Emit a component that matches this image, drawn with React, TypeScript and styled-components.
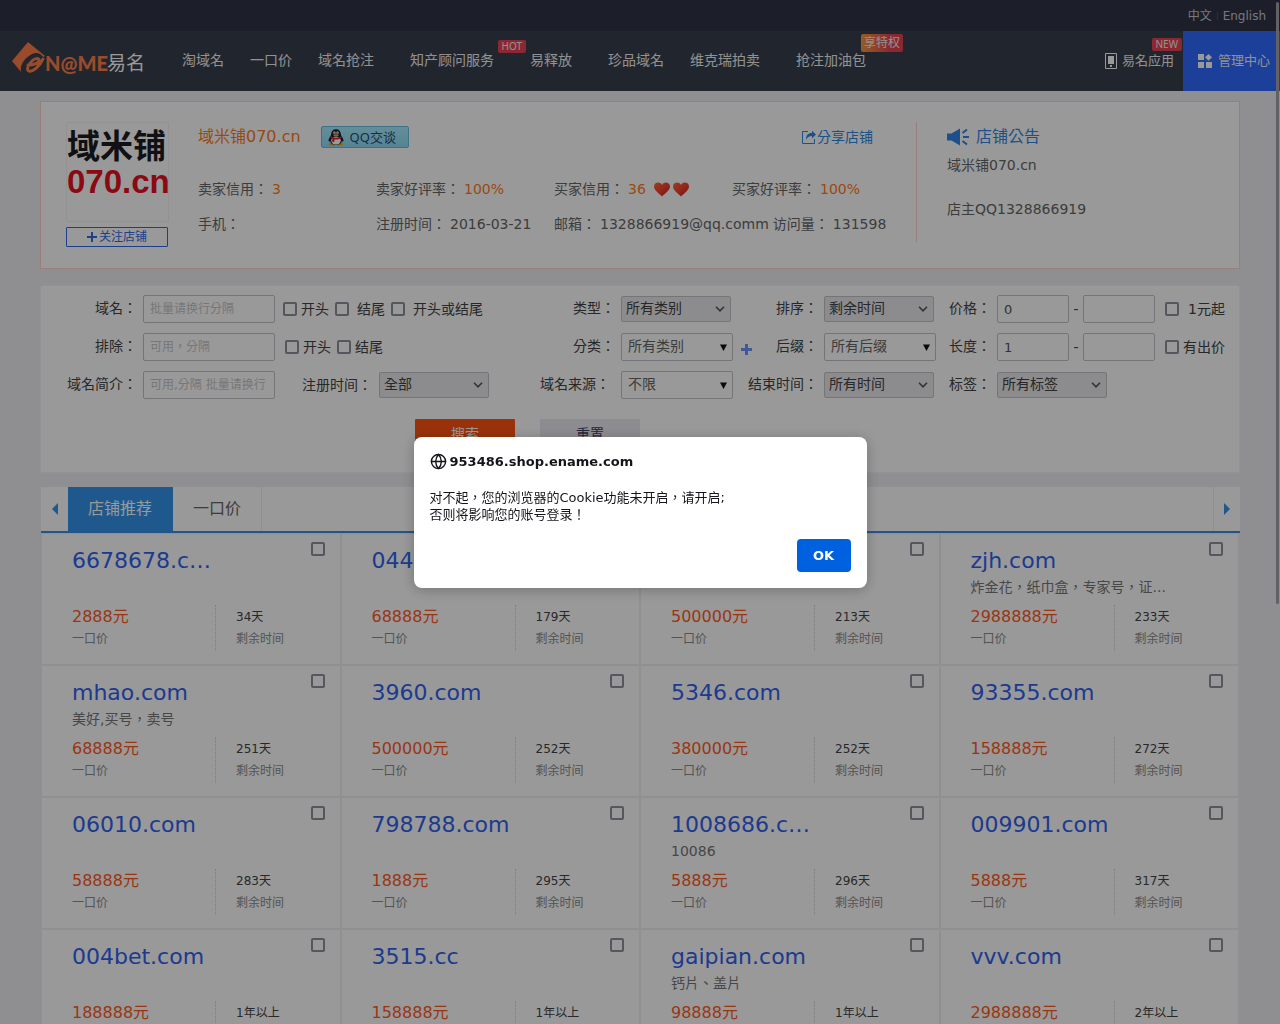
import React from "react";
import styled, { createGlobalStyle } from "styled-components";
import { Globe } from "lucide-react";

const sans = `"DejaVu Sans", "Noto Sans CJK TC", sans-serif`;

const GlobalStyle = createGlobalStyle`
  *, *::before, *::after { box-sizing: border-box; }
  body {
    margin: 0;
    background: #efeff4;
    font: 14px/20px ${sans};
    color: #444;
  }
  button, input, select { font: inherit; color: inherit; margin: 0; }
  a { text-decoration: none; color: inherit; }
  h1, h2, h3, p, ul, dl, dd { margin: 0; padding: 0; font-weight: normal; }
  ul { list-style: none; }
`;

const Page = styled.div`
  height: 100vh;
  overflow: hidden;
`;

/* ---------- header ---------- */
const TopBar = styled.div`
  display: flex;
  justify-content: flex-end;
  align-items: center;
  gap: 5px;
  height: 31px;
  padding-right: 14px;
  background: #2f3446;
  color: #c4c8d4;
  font-size: 12px;
`;
const Slash = styled.i`
  width: 1px;
  height: 8px;
  background: #4a5064;
`;
const NavBar = styled.header`
  display: flex;
  height: 60px;
  padding-left: 12px;
  background: #383e4e;
  color: #f2f2f2;
`;
const Logo = styled.a`
  width: 157px;
  padding-top: 9px;
`;
const NavList = styled.ul`
  display: flex;
  flex: 1;
`;
const NavItem = styled.li<{ $wide?: boolean }>`
  position: relative;
  padding: 0 13px;
  margin-left: ${(p) => (p.$wide ? 10 : 0)}px;
  line-height: 58px;
  white-space: nowrap;
`;
const Badge = styled.span<{ $large?: boolean }>`
  position: absolute;
  top: ${(p) => (p.$large ? 3 : 9)}px;
  right: ${(p) => (p.$large ? -24 : -19)}px;
  padding: 0 ${(p) => (p.$large ? 3 : 4)}px;
  border-radius: 2px;
  background: ${(p) => (p.$large ? "linear-gradient(90deg, #f79a45, #e8434f 70%)" : "#e84453")};
  font: ${(p) => (p.$large ? "12px/18px" : "10px/13px")} "Noto Sans", "Noto Sans CJK SC", sans-serif;
`;
const AppLink = styled.a`
  position: relative;
  display: flex;
  align-items: center;
  gap: 5px;
  padding-right: 9px;
  font-size: 13px;
`;
const NewBadge = styled(Badge)`
  top: 7px;
  right: 1px;
`;
const ManageLink = styled.a`
  display: flex;
  align-items: center;
  gap: 6px;
  padding: 0 10px 0 15px;
  background: #2f69ff;
  font-size: 13px;
`;

/* ---------- shop card ---------- */
const Container = styled.main`
  max-width: 1200px;
  margin: 10px auto 0;
`;
const ShopCard = styled.section`
  display: flex;
  min-height: 168px;
  padding: 20px 25px;
  border: 1px solid #ffd2cf;
  background: #fff;
  color: #666;
`;
const ShopSide = styled.div`
  flex: none;
  width: 103px;
  margin-right: 29px;
`;
const Avatar = styled.div`
  height: 100px;
  padding-top: 6px;
  border: 1px solid #f3f3f6;
  font: bold 33px/35px "Liberation Sans", "Noto Sans CJK SC", sans-serif;
  color: #1b1c24;
  white-space: nowrap;
`;
const AvatarDomain = styled.div`
  color: #e60f1e;
`;
const FollowButton = styled.button`
  display: flex;
  align-items: center;
  justify-content: center;
  gap: 2px;
  width: 102px;
  height: 20px;
  margin-top: 5px;
  padding: 0;
  border: 1px solid #2f69e8;
  border-radius: 1px;
  background: #fff;
  color: #2f69e8;
  font-size: 12px;
`;
const ShopInfo = styled.div`
  flex: 1;
  min-width: 0;
`;
const ShopHead = styled.div`
  display: flex;
  align-items: center;
  height: 30px;
  margin-bottom: 20px;
`;
const ShopName = styled.h1`
  margin-right: 20px;
  color: #ff7a1a;
  font-size: 16px;
`;
const QQLink = styled.a`
  display: flex;
  align-items: center;
  gap: 6px;
  width: 88px;
  height: 22px;
  padding-left: 6px;
  border: 1px solid #66bce0;
  border-radius: 2px;
  background: linear-gradient(#a8ecff, #8fdcf6);
  color: #1f4f74;
  font: 13px/20px "Noto Sans", "Noto Sans CJK SC", sans-serif;
`;
const ShareLink = styled.a`
  display: flex;
  align-items: center;
  gap: 1px;
  margin: 0 43px 0 auto;
  color: #2f86e6;
`;
const Facts = styled.dl`
  display: flex;
  line-height: 35px;
`;
const Fact = styled.div`
  display: flex;
  flex: none;
  gap: 4px;
  min-width: 178px;
  padding-right: 4px;
  white-space: nowrap;
  &:last-child { min-width: 0; padding-right: 0; }
`;
const FactValue = styled.dd<{ $hot?: boolean }>`
  display: flex;
  align-items: center;
  color: ${(p) => (p.$hot ? "#ff7a1a" : "inherit")};
`;
const Hearts = styled.span`
  display: flex;
  gap: 3px;
  margin-left: 8px;
`;
const Notice = styled.aside`
  flex: none;
  width: 298px;
  height: 120px;
  padding-left: 30px;
  border-left: 1px solid #ffd2cf;
  line-height: 22px;
`;
const NoticeTitle = styled.h2`
  display: flex;
  align-items: center;
  gap: 7px;
  height: 30px;
  margin-bottom: 2px;
  color: #2f86e6;
  font-size: 16px;
`;

/* ---------- filter ---------- */
const FilterForm = styled.form`
  margin-top: 16px;
  padding: 9px 0 23px;
  border: 1px solid #f4f4f8;
  background: #fff;
`;
const FilterGrid = styled.div`
  display: grid;
  grid-template-columns: 96px 1fr 75px 133px 70px 131px 42px 248px;
  row-gap: 10px;
`;
const FieldLabel = styled.label<{ $inset?: boolean }>`
  padding-right: ${(p) => (p.$inset ? 5 : 0)}px;
  line-height: 26px;
  text-align: right;
  white-space: nowrap;
`;
const Field = styled.div`
  display: flex;
  align-items: center;
  height: 28px;
  padding-left: 6px;
`;
const TextInput = styled.input<{ $short?: boolean }>`
  width: ${(p) => (p.$short ? 72 : 132)}px;
  height: 28px;
  padding: 0 6px;
  border: 1px solid #c4c4c9;
  border-radius: 2px;
  background: #fff;
  color: #555;
  font-size: ${(p) => (p.$short ? 13 : 12)}px;
  &::placeholder { color: #c6c6ca; }
`;
const Dash = styled.span`
  width: 14px;
  text-align: center;
`;
const SelectWrap = styled.span`
  display: inline-grid;
  align-items: center;
  svg {
    grid-area: 1 / 1;
    justify-self: end;
    margin-right: 6px;
    pointer-events: none;
  }
`;
const NativeSelect = styled.select<{ $plain?: boolean }>`
  grid-area: 1 / 1;
  appearance: none;
  width: ${(p) => (p.$plain ? 112 : 110)}px;
  height: ${(p) => (p.$plain ? 28 : 26)}px;
  padding: 0 ${(p) => (p.$plain ? 6 : 4)}px 2px;
  border: 1px solid #c4c4c9;
  border-radius: 2px;
  background: ${(p) => (p.$plain ? "#fff" : "#e9e9ed")};
  color: ${(p) => (p.$plain ? "#666" : "#444")};
`;
const Tick = styled.input`
  appearance: none;
  flex: none;
  width: 14px;
  height: 14px;
  border: 2px solid #8f8f9d;
  border-radius: 2px;
  background: #fff;
`;
const TickLabel = styled.label<{ $lead?: number; $gap?: number }>`
  display: flex;
  align-items: center;
  gap: ${(p) => p.$gap ?? 4}px;
  margin-left: ${(p) => p.$lead ?? 6}px;
  line-height: 26px;
  white-space: nowrap;
`;
const RegLabel = styled.label`
  margin: 0 7px 0 27px;
  line-height: 26px;
`;
const AddButton = styled.button`
  display: flex;
  margin-left: 8px;
  padding: 4px 0 0;
  border: 0;
  background: none;
  color: #6c93ff;
`;
const FilterActions = styled.div`
  display: flex;
  gap: 25px;
  margin: 20px 0 0 374px;
`;
const ActionButton = styled.button<{ $primary?: boolean }>`
  width: 100px;
  height: 30px;
  padding: 0;
  border: 0;
  border-radius: 1px;
  background: ${(p) => (p.$primary ? "#ff5413" : "#ebebf2")};
  color: ${(p) => (p.$primary ? "#fff" : "#3c3f66")};
`;

/* ---------- tabs ---------- */
const Tabs = styled.nav`
  display: flex;
  height: 46px;
  margin: 14px 0 1px 1px;
  border-bottom: 2px solid #428de0;
  background: #fff;
`;
const ArrowButton = styled.button<{ $next?: boolean }>`
  display: flex;
  align-items: center;
  justify-content: center;
  width: 27px;
  padding: 0;
  margin-left: ${(p) => (p.$next ? "auto" : 0)};
  border: 0;
  border-left: ${(p) => (p.$next ? "1px solid #eee" : "0")};
  background: none;
  color: #3393ec;
`;
const Tab = styled.button<{ $active?: boolean }>`
  padding: 0 20px;
  border: 0;
  border-right: 1px solid ${(p) => (p.$active ? "#3393ec" : "#eee")};
  background: ${(p) => (p.$active ? "#3393ec" : "#fff")};
  color: ${(p) => (p.$active ? "#fff" : "#666")};
  font-size: 16px;
`;

/* ---------- listing ---------- */
const Listing = styled.ul`
  display: grid;
  grid-template-columns: repeat(4, 1fr);
  margin-left: 2px;
`;
const Item = styled.li`
  height: 132px;
  padding: 8px 15px 0 30px;
  border: solid #f0f0f4;
  border-width: 0 2px 2px 0;
  background: #fff;
`;
const ItemHead = styled.div`
  display: flex;
  justify-content: space-between;
  height: 34px;
`;
const DomainLink = styled.a`
  color: #2f62f0;
  font-size: 22px;
  line-height: 37px;
  white-space: nowrap;
`;
const Note = styled.p`
  height: 29px;
  color: #777;
  line-height: 22px;
`;
const Numbers = styled.div`
  display: flex;
  height: 46px;
`;
const PriceBox = styled.div`
  width: 144px;
  border-right: 1px dotted #d2d2d6;
`;
const TimeBox = styled.div`
  padding-left: 20px;
`;
const Price = styled.p`
  color: #ff5a1f;
  font-size: 16px;
  line-height: 24px;
`;
const Time = styled.p`
  font-size: 12px;
  line-height: 24px;
`;
const Caption = styled.p`
  color: #8c8c8c;
  font-size: 12px;
  line-height: 20px;
`;

/* ---------- alert ---------- */
const Backdrop = styled.div`
  position: fixed;
  inset: 0;
  display: flex;
  align-items: center;
  justify-content: center;
  background: rgba(0, 0, 0, 0.4);
`;
const Alert = styled.div`
  width: 453px;
  padding: 16px;
  border-radius: 8px;
  background: #fff;
  box-shadow: 0 2px 14px rgba(0, 0, 0, 0.25);
  color: #15141a;
  font-size: 13px;
  line-height: 17px;
`;
const AlertTitle = styled.h2`
  display: flex;
  align-items: center;
  gap: 3px;
  margin-bottom: 19px;
  font-size: 13px;
  font-weight: bold;
`;
const AlertActions = styled.div`
  display: flex;
  justify-content: flex-end;
  margin-top: 16px;
`;
const OkButton = styled.button`
  width: 54px;
  height: 33px;
  padding: 0;
  border: 0;
  border-radius: 4px;
  background: #0061e0;
  color: #fff;
  font-weight: bold;
`;
const ScrollThumb = styled.div`
  position: fixed;
  top: 2px;
  right: 1px;
  width: 3px;
  height: 602px;
  border-radius: 2px;
  background: #a4a4aa;
`;

const Plus = ({ size }: { size: number }) => (
  <svg width={size} height={size} viewBox="0 0 11 11" aria-hidden="true">
    <path d="M4 0h3v4h4v3H7v4H4V7H0V4h4z" fill="currentColor" />
  </svg>
);
const ThinPlus = () => (
  <svg width="10" height="10" viewBox="0 0 10 10" aria-hidden="true">
    <path d="M4 0h2v4h4v2H6v4H4V6H0V4h4z" fill="currentColor" />
  </svg>
);

const Heart = () => (
  <svg width="16" height="15" viewBox="0 0 16 15" aria-hidden="true">
    <defs>
      <linearGradient id="heart" x1="0" y1="0" x2="1" y2="1">
        <stop offset="0" stopColor="#ff6a35" />
        <stop offset=".5" stopColor="#f4412f" />
        <stop offset="1" stopColor="#c3221c" />
      </linearGradient>
    </defs>
    <path d="M8 14.5C5 11.8 0 8.4 0 4.6 0 2 2 .5 4.200.5 6 .5 7.400 1.500 8 3 8.600 1.500 10 .5 11.800.5 14 .5 16 2 16 4.600 16 8.400 11 11.800 8 14.500z" fill="url(#heart)" />
  </svg>
);

const Penguin = () => (
  <svg width="16" height="17" viewBox="0 0 16 17" aria-hidden="true">
    <ellipse cx="4.500" cy="15.200" rx="3.600" ry="1.600" fill="#f6a623" />
    <ellipse cx="11.500" cy="15.200" rx="3.600" ry="1.600" fill="#f6a623" />
    <path d="M8 .3c3 0 4.800 2 4.800 5 0 1.500 2.700 4 2.700 6.200 0 1.300-.9 1.300-1.600.4C13.500 14.500 11 16 8 16s-5.500-1.500-5.900-4.100c-.7.9-1.600.9-1.600-.4C.5 9.300 3.200 6.800 3.200 5.300c0-3 1.800-5 4.800-5z" fill="#17212b" />
    <ellipse cx="8" cy="11.600" rx="4.800" ry="4" fill="#fff" />
    <ellipse cx="6.500" cy="3.700" rx="1.200" ry="1.500" fill="#fff" />
    <ellipse cx="9.500" cy="3.700" rx="1.200" ry="1.500" fill="#fff" />
    <circle cx="6.800" cy="4" r=".5" />
    <circle cx="9.200" cy="4" r=".5" />
    <ellipse cx="8" cy="6.200" rx="2.800" ry=".9" fill="#f6a623" />
    <path d="M2.800 7.200c3 1.900 7.400 1.900 10.400 0l.5 1.700c-2.500 1.500-5 1.800-7.200 1.600l-.3 2.600-2.200-.3.300-2.800-1.900-1z" fill="#e8262a" />
  </svg>
);

const Chevron = () => (
  <svg width="10" height="6" viewBox="0 0 10 6" aria-hidden="true">
    <path d="M1 .8l4 4 4-4" fill="none" stroke="#55555c" strokeWidth="1.600" />
  </svg>
);
const Triangle = () => (
  <svg width="7" height="7" viewBox="0 0 7 7" aria-hidden="true">
    <path d="M0 .5h7L3.500 7z" fill="#111" />
  </svg>
);

function Select({ id, value, plain }: { id: string; value: string; plain?: boolean }) {
  return (
    <SelectWrap>
      <NativeSelect id={id} $plain={plain} defaultValue={value}>
        <option>{value}</option>
      </NativeSelect>
      {plain ? <Triangle /> : <Chevron />}
    </SelectWrap>
  );
}

const navItems: { text: string; badge?: string; large?: boolean; wide?: boolean }[] = [
  { text: "淘域名" },
  { text: "一口价" },
  { text: "域名抢注" },
  { text: "知产顾问服务", badge: "HOT", wide: true },
  { text: "易释放", wide: true },
  { text: "珍品域名", wide: true },
  { text: "维克瑞拍卖" },
  { text: "抢注加油包", badge: "享特权", large: true, wide: true },
];

const facts = [
  [
    { name: "卖家信用", value: "3", hot: true },
    { name: "卖家好评率", value: "100%", hot: true },
    { name: "买家信用", value: "36", hot: true, hearts: 2 },
    { name: "买家好评率", value: "100%", hot: true },
  ],
  [
    { name: "手机", value: "" },
    { name: "注册时间", value: "2016-03-21" },
    { name: "邮箱", value: "1328866919@qq.comm" },
    { name: "访问量", value: "131598" },
  ],
] as { name: string; value: string; hot?: boolean; hearts?: number }[][];

const items: [string, string, string, string][] = [
  ["6678678.c…", "", "2888", "34天"],
  ["04499.com", "", "68888", "179天"],
  ["5518.com", "", "500000", "213天"],
  ["zjh.com", "炸金花，纸巾盒，专家号，证...", "2988888", "233天"],
  ["mhao.com", "美好,买号，卖号", "68888", "251天"],
  ["3960.com", "", "500000", "252天"],
  ["5346.com", "", "380000", "252天"],
  ["93355.com", "", "158888", "272天"],
  ["06010.com", "", "58888", "283天"],
  ["798788.com", "", "1888", "295天"],
  ["1008686.c…", "10086", "5888", "296天"],
  ["009901.com", "", "5888", "317天"],
  ["004bet.com", "", "188888", "1年以上"],
  ["3515.cc", "", "158888", "1年以上"],
  ["gaipian.com", "钙片、盖片", "98888", "1年以上"],
  ["vvv.com", "", "2988888", "2年以上"],
];

export default function App() {
  const [open, setOpen] = React.useState(true);
  return (
    <Page>
      <GlobalStyle />
      <TopBar>
        <a href="#zh">中文</a>
        <Slash />
        <a href="#en">English</a>
      </TopBar>
      <NavBar>
        <Logo href="#home" aria-label="易名">
          <svg width="134" height="34" viewBox="0 0 134 34">
            <path d="M0 21L16 2l17 14-2 1c-3-5-9-5-14-1-6 4-9 10-8 16z" fill="#ff7e48" />
            <path d="M16 25c6 0 11-2 11-5 0-2-4-2-7 1-4 4-6 9-3 10 4 1 10-4 14-12" fill="none" stroke="#ff7e48" strokeWidth="3" strokeLinecap="round" />
            <text x="33" y="31" fontSize="20" fontWeight="900" fontFamily="Lato, sans-serif" fill="#ff7e48">N@ME</text>
            <text x="95" y="30" fontSize="19" fontFamily="Noto Sans CJK SC, sans-serif" fill="#fff">易名</text>
          </svg>
        </Logo>
        <NavList>
          {navItems.map((n) => (
            <NavItem key={n.text} $wide={n.wide}>
              <a href="#nav">{n.text}</a>
              {n.badge && <Badge $large={n.large}>{n.badge}</Badge>}
            </NavItem>
          ))}
        </NavList>
        <AppLink href="#app">
          <svg width="12" height="16" viewBox="0 0 12 16" aria-hidden="true">
            <path d="M.5.5h11v15H.5z" fill="none" stroke="#fff" />
            <path d="M3 3h6v8H3zM5 12h2v2H5z" fill="#fff" />
          </svg>
          易名应用
          <NewBadge>NEW</NewBadge>
        </AppLink>
        <ManageLink href="#manage">
          <svg width="14" height="14" viewBox="0 0 14 14" aria-hidden="true">
            <path d="M0 0h6v6H0zM0 8h6v6H0zM8 8h6v6H8zM10.500 0L14 3.300 10.500 6.800 7 3.300z" fill="#fff" />
          </svg>
          管理中心
        </ManageLink>
      </NavBar>

      <Container>
        <ShopCard>
          <ShopSide>
            <Avatar>
              域米铺
              <AvatarDomain>070.cn</AvatarDomain>
            </Avatar>
            <FollowButton type="button">
              <ThinPlus />
              关注店铺
            </FollowButton>
          </ShopSide>
          <ShopInfo>
            <ShopHead>
              <ShopName>域米铺070.cn</ShopName>
              <QQLink href="#qq">
                <Penguin />
                QQ交谈
              </QQLink>
              <ShareLink href="#share">
                <svg width="14" height="14" viewBox="0 0 14 14" aria-hidden="true">
                  <path d="M6 1.500H.5v12h12V9" fill="none" stroke="currentColor" />
                  <path d="M4 10c0-5 2-7 6-7V.8L14 4.500l-4 4V6C7 6 5.500 7 4 10z" fill="currentColor" />
                </svg>
                分享店铺
              </ShareLink>
            </ShopHead>
            {facts.map((row) => (
              <Facts key={row[0].name}>
                {row.map((f) => (
                  <Fact key={f.name}>
                    <dt>{f.name}：</dt>
                    <FactValue $hot={f.hot}>
                      {f.value}
                      {f.hearts && (
                        <Hearts>
                          <Heart />
                          <Heart />
                        </Hearts>
                      )}
                    </FactValue>
                  </Fact>
                ))}
              </Facts>
            ))}
          </ShopInfo>
          <Notice>
            <NoticeTitle>
              <svg width="22" height="18" viewBox="0 0 22 18" aria-hidden="true">
                <path d="M0 5.500h4.500L13 .5v17l-8.500-5H0z" fill="currentColor" />
                <path d="M15.500 5L20 1.500M16 9h6M15.500 13l4.500 3.500" stroke="currentColor" strokeWidth="2" />
              </svg>
              店铺公告
            </NoticeTitle>
            <p>域米铺070.cn</p>
            <br />
            <p>店主QQ1328866919</p>
          </Notice>
        </ShopCard>

        <FilterForm onSubmit={(e) => e.preventDefault()}>
          <FilterGrid>
            <FieldLabel htmlFor="domain">域名：</FieldLabel>
            <Field>
              <TextInput id="domain" placeholder="批量请换行分隔" />
              <TickLabel $lead={8}><Tick type="checkbox" />开头</TickLabel>
              <TickLabel $gap={8}><Tick type="checkbox" />结尾</TickLabel>
              <TickLabel $gap={8}><Tick type="checkbox" />开头或结尾</TickLabel>
            </Field>
            <FieldLabel htmlFor="type">类型：</FieldLabel>
            <Field><Select id="type" value="所有类别" /></Field>
            <FieldLabel htmlFor="sort">排序：</FieldLabel>
            <Field><Select id="sort" value="剩余时间" /></Field>
            <FieldLabel htmlFor="price">价格：</FieldLabel>
            <Field>
              <TextInput $short id="price" defaultValue="0" />
              <Dash>-</Dash>
              <TextInput $short aria-label="最高价格" />
              <TickLabel $lead={10} $gap={9}><Tick type="checkbox" />1元起</TickLabel>
            </Field>

            <FieldLabel htmlFor="exclude">排除：</FieldLabel>
            <Field>
              <TextInput id="exclude" placeholder="可用，分隔" />
              <TickLabel $lead={10}><Tick type="checkbox" />开头</TickLabel>
              <TickLabel><Tick type="checkbox" />结尾</TickLabel>
            </Field>
            <FieldLabel htmlFor="group">分类：</FieldLabel>
            <Field>
              <Select plain id="group" value="所有类别" />
              <AddButton type="button" aria-label="添加分类"><Plus size={11} /></AddButton>
            </Field>
            <FieldLabel htmlFor="suffix">后缀：</FieldLabel>
            <Field><Select plain id="suffix" value="所有后缀" /></Field>
            <FieldLabel htmlFor="length">长度：</FieldLabel>
            <Field>
              <TextInput $short id="length" defaultValue="1" />
              <Dash>-</Dash>
              <TextInput $short aria-label="最大长度" />
              <TickLabel $lead={10}><Tick type="checkbox" />有出价</TickLabel>
            </Field>

            <FieldLabel htmlFor="intro">域名简介：</FieldLabel>
            <Field>
              <TextInput id="intro" placeholder="可用,分隔 批量请换行" />
              <RegLabel htmlFor="registered">注册时间：</RegLabel>
              <Select id="registered" value="全部" />
            </Field>
            <FieldLabel $inset htmlFor="source">域名来源：</FieldLabel>
            <Field><Select plain id="source" value="不限" /></Field>
            <FieldLabel htmlFor="end">结束时间：</FieldLabel>
            <Field><Select id="end" value="所有时间" /></Field>
            <FieldLabel htmlFor="tag">标签：</FieldLabel>
            <Field><Select id="tag" value="所有标签" /></Field>
          </FilterGrid>
          <FilterActions>
            <ActionButton $primary type="submit">搜索</ActionButton>
            <ActionButton type="reset">重置</ActionButton>
          </FilterActions>
        </FilterForm>

        <Tabs>
          <ArrowButton type="button" aria-label="上一页">
            <svg width="6" height="12" viewBox="0 0 6 12"><path d="M6 0v12L0 6z" fill="currentColor" /></svg>
          </ArrowButton>
          <Tab type="button" $active>店铺推荐</Tab>
          <Tab type="button">一口价</Tab>
          <ArrowButton type="button" $next aria-label="下一页">
            <svg width="6" height="12" viewBox="0 0 6 12"><path d="M0 0v12l6-6z" fill="currentColor" /></svg>
          </ArrowButton>
        </Tabs>

        <Listing>
          {items.map(([domain, note, price, time]) => (
            <Item key={domain}>
              <ItemHead>
                <DomainLink href="#domain">{domain}</DomainLink>
                <Tick type="checkbox" aria-label={domain} />
              </ItemHead>
              <Note>{note}</Note>
              <Numbers>
                <PriceBox>
                  <Price>{price}元</Price>
                  <Caption>一口价</Caption>
                </PriceBox>
                <TimeBox>
                  <Time>{time}</Time>
                  <Caption>剩余时间</Caption>
                </TimeBox>
              </Numbers>
            </Item>
          ))}
        </Listing>
      </Container>

      <ScrollThumb />
      {open && (
        <Backdrop>
          <Alert role="alertdialog" aria-labelledby="alert-title" aria-describedby="alert-text">
            <AlertTitle id="alert-title">
              <Globe size={17} strokeWidth={2} />
              953486.shop.ename.com
            </AlertTitle>
            <p id="alert-text">
              对不起，您的浏览器的Cookie功能未开启，请开启;
              <br />
              否则将影响您的账号登录！
            </p>
            <AlertActions>
              <OkButton type="button" onClick={() => setOpen(false)}>OK</OkButton>
            </AlertActions>
          </Alert>
        </Backdrop>
      )}
    </Page>
  );
}
